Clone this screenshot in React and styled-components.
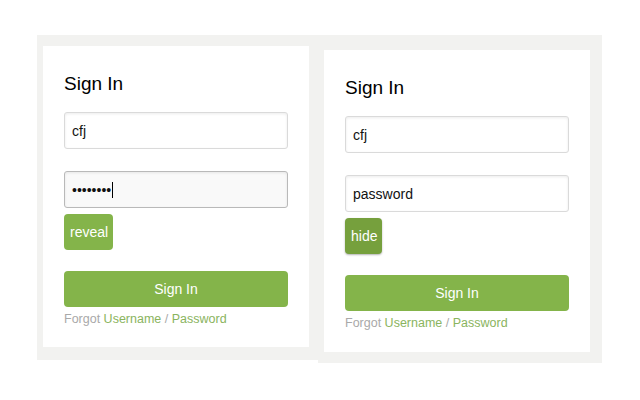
import React from "react";
import styled, { createGlobalStyle } from "styled-components";

const GlobalStyle = createGlobalStyle`
  html, body {
    margin: 0;
    padding: 0;
    background: #fff;
  }
  body {
    font-family: "Liberation Sans", Arial, sans-serif;
  }
`;

const Page = styled.div`
  width: 640px;
  height: 400px;
  padding: 35px 0 0 37px;
  box-sizing: border-box;
  display: flex;
  align-items: flex-start;
`;

const Frame = styled.div`
  background-color: #f2f2f0;
  padding: ${(p) => p.$pad};
`;

const Card = styled.div`
  width: 266px;
  height: ${(p) => p.$height}px;
  box-sizing: border-box;
  background-color: #fff;
  padding: 26px 21px 0;
  display: flex;
  flex-direction: column;
  align-items: flex-start;
`;

const Title = styled.h2`
  margin: 0 0 16px;
  font-size: 19px;
  font-weight: normal;
  line-height: 24px;
  color: #000;
`;

const Field = styled.div`
  width: 224px;
  height: 37px;
  box-sizing: border-box;
  padding: 0 7px;
  display: flex;
  align-items: center;
  border: solid 1px ${(p) => (p.$focused ? "#b9b9b9" : "#dadada")};
  border-radius: 3px;
  background-color: ${(p) => (p.$focused ? "#f9f9f9" : "#fff")};
  box-shadow: inset 0 1px 3px rgba(0, 0, 0, 0.08);
  font-size: 14px;
  color: #111;
  margin-bottom: ${(p) => p.$gap}px;
`;

const Caret = styled.span`
  width: 1px;
  height: 16px;
  margin-left: 1px;
  background-color: #000;
`;

const ToggleButton = styled.button`
  height: 36px;
  padding: 0 5px 0 6px;
  border: none;
  border-radius: 4px;
  background-color: ${(p) => (p.$dark ? "#76a03d" : "#84b44a")};
  box-shadow: ${(p) => (p.$dark ? "0 1px 2px rgba(0, 0, 0, 0.3)" : "none")};
  font-family: "Liberation Sans", Arial, sans-serif;
  font-size: 14px;
  color: #fff;
  margin-bottom: 21px;
`;

const SubmitButton = styled.button`
  width: 224px;
  height: 36px;
  border: none;
  border-radius: 4px;
  background-color: #84b44a;
  font-family: "Liberation Sans", Arial, sans-serif;
  font-size: 14px;
  color: #fff;
  margin-bottom: 4px;
`;

const Forgot = styled.div`
  font-size: 12.5px;
  line-height: 16px;
  color: #a9a9a9;
`;

const Link = styled.a`
  color: #8ab45e;
  text-decoration: none;
`;

function SignInCard({ height, revealed }) {
  return (
    <Card $height={height}>
      <Title>Sign In</Title>
      <Field $gap={22}>cfj</Field>
      {revealed ? (
        <Field $gap={6}>password</Field>
      ) : (
        <Field $gap={6} $focused>
          <span>••••••••</span>
          <Caret />
        </Field>
      )}
      <ToggleButton $dark={revealed}>{revealed ? "hide" : "reveal"}</ToggleButton>
      <SubmitButton>Sign In</SubmitButton>
      <Forgot>
        Forgot <Link href="#">Username</Link> / <Link href="#">Password</Link>
      </Forgot>
    </Card>
  );
}

export default function App() {
  return (
    <>
      <GlobalStyle />
      <Page>
        <Frame $pad="11px 9px 13px 6px">
          <SignInCard height={301} />
        </Frame>
        <Frame $pad="15px 12px 11px 6px">
          <SignInCard height={302} revealed />
        </Frame>
      </Page>
    </>
  );
}
